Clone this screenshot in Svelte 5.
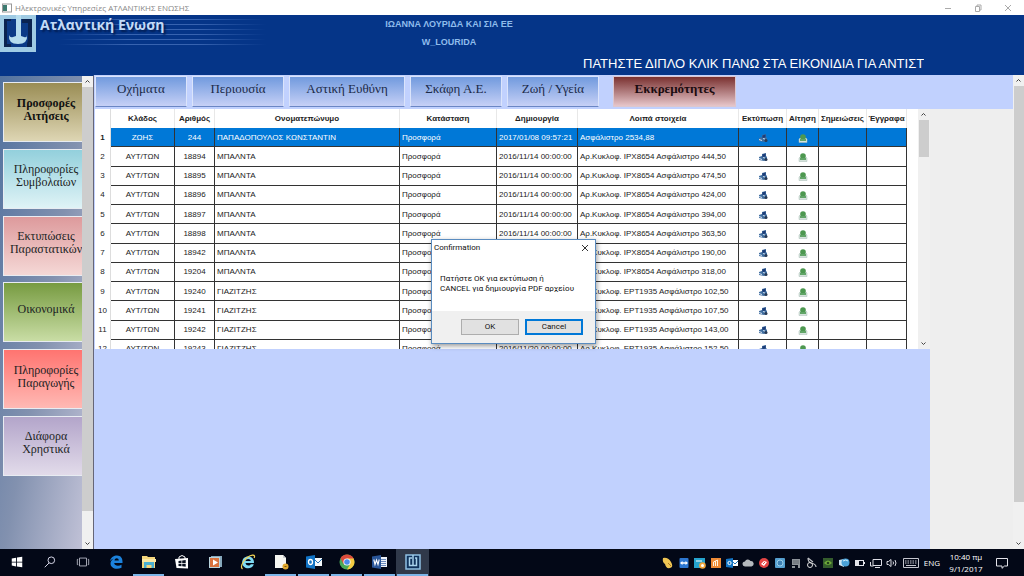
<script lang="ts">
    const menu = [
        { lines: ['Προσφορές', 'Αιτήσεις'], color: 'olive', active: true },
        { lines: ['Πληροφορίες', 'Συμβολαίων'], color: 'cyan' },
        { lines: ['Εκτυπώσεις', 'Παραστατικών'], color: 'pink' },
        { lines: ['Οικονομικά'], color: 'green' },
        { lines: ['Πληροφορίες', 'Παραγωγής'], color: 'red' },
        { lines: ['Διάφορα', 'Χρηστικά'], color: 'purple' }
    ];

    const tabs = ['Οχήματα', 'Περιουσία', 'Αστική Ευθύνη', 'Σκάφη Α.Ε.', 'Ζωή / Υγεία'];

    const columns = [
        'Κλάδος', 'Αριθμός', 'Ονοματεπώνυμο', 'Κατάσταση', 'Δημιουργία',
        'Λοιπά στοιχεία', 'Εκτύπωση', 'Αίτηση', 'Σημειώσεις', 'Έγγραφα'
    ];

    const car = (no: number, name: string, date: string, plate: string, amount: string) => ({
        branch: 'ΑΥΤ/ΤΩΝ',
        no,
        name,
        date: `${date} 00:00:00`,
        info: `Αρ.Κυκλοφ. ${plate} Ασφάλιστρο ${amount}`
    });

    const rows = [
        { branch: 'ΖΩΗΣ', no: 244, name: 'ΠΑΠΑΔΟΠΟΥΛΟΣ ΚΩΝΣΤΑΝΤΙΝ', date: '2017/01/08 09:57:21', info: 'Ασφάλιστρο 2534,88' },
        car(18894, 'ΜΠΑΛΝΤΑ', '2016/11/14', 'ΙΡΧ8654', '444,50'),
        car(18895, 'ΜΠΑΛΝΤΑ', '2016/11/14', 'ΙΡΧ8654', '474,50'),
        car(18896, 'ΜΠΑΛΝΤΑ', '2016/11/14', 'ΙΡΧ8654', '424,00'),
        car(18897, 'ΜΠΑΛΝΤΑ', '2016/11/14', 'ΙΡΧ8654', '394,00'),
        car(18898, 'ΜΠΑΛΝΤΑ', '2016/11/14', 'ΙΡΧ8654', '363,50'),
        car(18942, 'ΜΠΑΛΝΤΑ', '2016/11/14', 'ΙΡΧ8654', '190,00'),
        car(19204, 'ΜΠΑΛΝΤΑ', '2016/11/14', 'ΙΡΧ8654', '318,00'),
        car(19240, 'ΓΙΑΖΙΤΖΗΣ', '2016/11/20', 'ΕΡΤ1935', '102,50'),
        car(19241, 'ΓΙΑΖΙΤΖΗΣ', '2016/11/20', 'ΕΡΤ1935', '107,50'),
        car(19242, 'ΓΙΑΖΙΤΖΗΣ', '2016/11/20', 'ΕΡΤ1935', '143,00'),
        car(19243, 'ΓΙΑΖΙΤΖΗΣ', '2016/11/20', 'ΕΡΤ1935', '152,50')
    ];

    let selected = $state(0);
    let confirming = $state(true);
</script>

{#snippet scrollbar(kind: string)}
    <div class="scrollbar {kind}">
        <button aria-label="Επάνω"><svg viewBox="0 0 11 11"><path d="M3.5 6.5l2-2 2 2" /></svg></button>
        <div class="track"><div class="thumb"></div></div>
        <button aria-label="Κάτω"><svg viewBox="0 0 11 11"><path d="M3.5 4.5l2 2 2-2" /></svg></button>
    </div>
{/snippet}

<div class="desktop">
    <div class="titlebar">
        <svg class="app-icon" viewBox="0 0 10 10">
            <rect x="0.5" y="1" width="9" height="8" fill="#fff" stroke="#999" />
            <rect x="1" y="2" width="4" height="6" fill="#3c7a70" />
        </svg>
        <span>Ηλεκτρονικές Υπηρεσίες ΑΤΛΑΝΤΙΚΗΣ ΕΝΩΣΗΣ</span>
        <div class="window-controls">
            <button aria-label="Ελαχιστοποίηση"><svg viewBox="0 0 10 10"><path d="M2 5.5h6" /></svg></button>
            <button aria-label="Επαναφορά"><svg viewBox="0 0 10 10"><path d="M2.5 3.5h4v5h-4zM4 3V2h4v5H7" /></svg></button>
            <button aria-label="Κλείσιμο"><svg viewBox="0 0 10 10"><path d="M2 2l6 6M8 2l-6 6" /></svg></button>
        </div>
    </div>

    <header>
        <div class="brand">
            <svg class="logo" viewBox="0 0 36 37">
                <rect width="36" height="37" fill="#9fcbe4" />
                <path d="M4 4h28v28H4z" fill="#0b3a86" />
                <path d="M4 4h7v2H7v23h4v3H4zM22 4h10v28h-5v-3l1-4V8h-6z" fill="#0a2350" />
                <path d="M16 0h5v21h-5z" fill="#b5dcee" />
                <path d="M9 20q1 3 4 2l3-1h5l3 1q3 1 3-2 1 9-9 9Q8 29 9 20z" fill="#b5dcee" />
            </svg>
            <div class="stripes">
                <h1>Ατλαντική Ενωση</h1>
            </div>
        </div>
        <div class="user">
            <p>ΙΩΑΝΝΑ ΛΟΥΡΙΔΑ ΚΑΙ ΣΙΑ ΕΕ</p>
            <p>W_LOURIDA</p>
        </div>
        <p class="marquee">ΠΑΤΗΣΤΕ ΔΙΠΛΟ ΚΛΙΚ ΠΑΝΩ ΣΤΑ ΕΙΚΟΝΙΔΙΑ ΓΙΑ ΑΝΤΙΣΤΟ</p>
    </header>

    <div class="content">
        <aside>
            <nav>
                {#each menu as { lines, color, active }}
                    <button class="menu-item {color}" class:active>
                        {#each lines as line}<span>{line}</span>{/each}
                    </button>
                {/each}
            </nav>
            {@render scrollbar('side')}
        </aside>

        <main>
            <div class="tabs">
                {#each tabs as tab}
                    <button class="tab" class:wide={tab === 'Αστική Ευθύνη'}>{tab}</button>
                {/each}
                <button class="tab pending">Εκκρεμότητες</button>
            </div>

            <div class="workspace">
                <div class="left">
                    <div class="grid">
                        <div class="table-clip">
                            <table>
                                <colgroup>
                                    <col class="c-index" /><col class="c-branch" /><col class="c-no" />
                                    <col class="c-name" /><col class="c-state" /><col class="c-date" />
                                    <col class="c-info" /><col class="c-print" /><col class="c-apply" />
                                    <col class="c-notes" /><col class="c-docs" />
                                </colgroup>
                                <thead>
                                    <tr>
                                        <th class="index"></th>
                                        {#each columns as column}<th>{column}</th>{/each}
                                    </tr>
                                </thead>
                                <tbody>
                                    {#each rows as row, i}
                                        <tr class:selected={i === selected} onclick={() => (selected = i)}>
                                            <td class="index">{i + 1}</td>
                                            <td class="center">{row.branch}</td>
                                            <td class="center">{row.no}</td>
                                            <td>{row.name}</td>
                                            <td>Προσφορά</td>
                                            <td>{row.date}</td>
                                            <td>{row.info}</td>
                                            <td class="center">
                                                <svg class="cell-icon" viewBox="0 0 10 10">
                                                    <path d="M1 5l3-1V2l4-1v3l1 1v3L6 9 1 8z" fill="#3f6d9f" />
                                                    <path d="M4.5 2.5l3-1v3l-3 .5z" fill="#1d3c78" />
                                                    <path d="M1 6l3 1v1L1 7z" fill="#d6e2ef" />
                                                    <circle cx="8" cy="7.5" r="1.5" fill="#283a55" />
                                                    <path d="M5 5.5l2 .5" stroke="#c8d9ea" />
                                                </svg>
                                            </td>
                                            <td class="center">
                                                <svg class="cell-icon" viewBox="0 0 10 10">
                                                    <path d="M1 6l1-1h6l1 1v3.5H1z" fill="#d5e3dc" stroke="#a9bdb6" stroke-width=".5" />
                                                    <circle cx="5" cy="4" r="2.8" fill="#4d9850" />
                                                    <path d="M2 6h6v2H2z" fill="#62a568" />
                                                </svg>
                                            </td>
                                            <td></td>
                                            <td></td>
                                        </tr>
                                    {/each}
                                </tbody>
                            </table>
                        </div>
                        {@render scrollbar('list')}
                    </div>
                </div>
                <div class="blank"></div>
            </div>
        </main>
        {@render scrollbar('page')}
    </div>

    {#if confirming}
        <div class="dialog" role="dialog" aria-labelledby="dialog-title">
            <div class="dialog-head">
                <span id="dialog-title">Confirmation</span>
                <button aria-label="Close" onclick={() => (confirming = false)}>
                    <svg viewBox="0 0 8 8"><path d="M1 1l6 6M7 1L1 7" /></svg>
                </button>
            </div>
            <p>Πατήστε ΟΚ για εκτύπωση ή<br />CANCEL για δημιουργία PDF αρχείου</p>
            <div class="dialog-actions">
                <button onclick={() => (confirming = false)}>OK</button>
                <button class="default" onclick={() => (confirming = false)}>Cancel</button>
            </div>
        </div>
    {/if}

    <footer>
        <button aria-label="Start">
            <svg class="small" viewBox="0 0 16 16"><path d="M2 4l5-1v4.6H2zM8 2.9L14 2v5.6H8zM2 8.5h5V13l-5-1zM8 8.5h6V14l-6-.9z" fill="#fff" /></svg>
        </button>
        <button aria-label="Search">
            <svg class="small" viewBox="0 0 16 16" fill="none" stroke="#dde" stroke-width="1.1"><circle cx="9.5" cy="6" r="3.8" /><path d="M7 9l-5 5" /></svg>
        </button>
        <button aria-label="Task view">
            <svg class="small" viewBox="0 0 16 16" fill="none" stroke="#b9bcc8"><path d="M4 3.5h8v9H4zM2.500 5h-1v6h1M13.500 5h1v6h-1" /></svg>
        </button>
        <button aria-label="Edge">
            <svg viewBox="0 0 16 16"><path d="M2 7C3 3 6 1.5 9 1.5c4 0 5.500 3 5.500 6V9H6.200c.2 3 4.500 3.500 7.300 1.800v3C8 16.200 2.500 14 2.500 9.500c0-2 1.300-3.800 3.200-4.700C4.200 5 3 5.800 2 7zm4.500-.6h4.300C10.700 3.700 6.900 3.600 6.500 6.400z" fill="#1c82dc" /></svg>
        </button>
        <button class="open" aria-label="Explorer">
            <svg viewBox="0 0 16 16"><path d="M1 2h5l1 1h7v11H1z" fill="#f4d67c" /><path d="M1 5h14v3H1z" fill="#fbe9a5" /><path d="M3 8h10v6h-2.500v-3h-5v3H3z" fill="#4bb0d2" /></svg>
        </button>
        <button aria-label="Store">
            <svg viewBox="0 0 16 16"><path d="M5 5V3q3-3 6 0v2" fill="none" stroke="#fff" /><path d="M1 5l13-1v10.500L2.500 14z" fill="#fff" /><path d="M4.500 7l3-.4V9h-3zM8.200 6.500l3.500-.4V9H8.200zM4.500 9.700h3v2.500l-3-.3zM8.200 9.700h3.500v3l-3.500-.4z" fill="#08101f" /></svg>
        </button>
        <button aria-label="Media player">
            <svg viewBox="0 0 16 16"><rect x="4" y="2" width="11" height="11" fill="#87a9bd" /><rect x="2" y="3" width="11" height="11" fill="#b9d3dc" /><rect x="3" y="4" width="9" height="9" fill="#d8713c" /><path d="M6 5.500l5 3-5 3z" fill="#fff" /></svg>
        </button>
        <button aria-label="Internet Explorer">
            <svg viewBox="0 0 16 16"><path d="M8 2.500c4 0 6 2.500 6 6.500H5.500c.4 3 4.400 3.200 5.300 1.200h3C12.500 16 2.200 15.800 2.200 8.500c0-3.800 2.400-6 5.800-6zM5.500 7h5.300C10.600 4.200 5.900 4.200 5.500 7z" fill="#7edaf3" /><path d="M2.500 15C-1 12 6 2 12.500 1.200c2.500-.2 2.300 1.500 1.600 2.800" fill="none" stroke="#f0d254" stroke-width="1.2" /></svg>
        </button>
        <button class="open" aria-label="Document">
            <svg viewBox="0 0 16 16"><path d="M2 1h8l3 3v10H2z" fill="#f6f6f2" /><path d="M10 1v3h3z" fill="#c9ccd0" /><circle cx="12.500" cy="12.500" r="3" fill="#e2a92f" /><path d="M11.500 12.500h2" stroke="#7d5510" /></svg>
        </button>
        <button class="open" aria-label="Outlook">
            <svg viewBox="0 0 16 16"><path d="M8 4h8v8H8z" fill="#f3f8fc" /><path d="M8 5l4 4 4-4" fill="none" stroke="#2474b8" /><path d="M0 2.500L9 1v14L0 13.500z" fill="#1173c5" /><ellipse cx="4.500" cy="8" rx="2" ry="2.500" fill="none" stroke="#fff" stroke-width="1.3" /></svg>
        </button>
        <button class="open" aria-label="Chrome">
            <svg viewBox="0 0 16 16"><circle cx="8" cy="8" r="7.500" fill="#4aa857" /><path d="M1.500 4.250A7.500 7.500 0 0 1 14.500 4.250L15 8H8L4.500 10z" fill="#dc4a3c" /><path d="M14.600 4.500H8l3.200 5.500L8 15.500A7.500 7.500 0 0 0 14.600 4.500z" fill="#f5cb42" /><circle cx="8" cy="8" r="3.600" fill="#fff" /><circle cx="8" cy="8" r="2.800" fill="#4b8bea" /></svg>
        </button>
        <button class="open" aria-label="Word">
            <svg viewBox="0 0 16 16"><path d="M8 3h7v10H8z" fill="#eef3fa" /><path d="M9 5.500h5M9 7.500h5M9 9.500h5M9 11.500h5" stroke="#4a70ad" stroke-width=".8" /><path d="M0 2.500L9 1v14L0 13.500z" fill="#2a5699" /><path d="M1.800 5.500l1.200 5 1.500-4.500L6 10.500l1.200-5" fill="none" stroke="#fff" stroke-width="1.1" /></svg>
        </button>
        <button class="open current" aria-label="Ατλαντική Ενωση">
            <svg viewBox="0 0 16 16"><rect x="1" y="1" width="14" height="14" fill="#10335c" stroke="#8fc0e2" stroke-width="1.5" /><path d="M8 1v10M7 4H4.500v7.500h7V4H10" fill="none" stroke="#a8d2ec" stroke-width="1.5" /></svg>
        </button>

        <div class="tray">
            <svg viewBox="0 0 12 12"><path d="M1 1q5-1 8 4 3 5-1 6T3 7Q0 5 1 1z" fill="#efc553" /><path d="M6 6l3 3" stroke="#a7782a" /></svg>
            <svg viewBox="0 0 12 12"><rect x="1.500" y="1" width="9" height="10" rx="1" fill="#2d77d1" /><path d="M2 6l2.500-2v1.200h3V4L10 6 7.500 8V6.800h-3V8z" fill="#fff" /></svg>
            <svg viewBox="0 0 12 12"><rect y="1" width="11" height="10" fill="#25a3ce" /><path d="M2 4h6" stroke="#fff" /><circle cx="8.500" cy="8.500" r="3.300" fill="#f2a43a" /><circle cx="8.500" cy="8.500" r="1.500" fill="#fff" /></svg>
            <svg viewBox="0 0 12 12"><rect x="1" y="1" width="10" height="10" fill="#ee8a35" /><path d="M3.500 9V5l4-2v6M5.500 4v5" fill="none" stroke="#fff4e0" /></svg>
            <svg viewBox="0 0 12 12"><path d="M6 3h6v6H6z" fill="#fff" /><path d="M6 4l3 3 3-3" fill="none" stroke="#1f76bd" /><path d="M0 2l7-1v10l-7-1z" fill="#1475c4" /><circle cx="3.500" cy="6" r="1.600" fill="none" stroke="#fff" /></svg>
            <svg viewBox="0 0 12 12"><path d="M3 9.500a2.500 2.500 0 0 1 0-5 3 3 0 0 1 5.500-.5A2.800 2.800 0 0 1 9.500 9.500z" fill="#b5b9be" /></svg>
            <svg viewBox="0 0 12 12"><circle cx="6" cy="6" r="5" fill="#e44545" /><path d="M3 7l3-3 3 1-3 4z" fill="#fff" /><path d="M5 7l2-2" stroke="#e44545" /></svg>
            <svg viewBox="0 0 12 12"><rect x="1" y="1" width="10" height="10" rx="1" fill="#559fd0" /><circle cx="6" cy="6" r="3" fill="#3f81b5" stroke="#9dd0e9" /></svg>
            <svg viewBox="0 0 12 12"><path d="M2 2h8v6H2zM2 9h3v2H2zM8 8h2v3H8z" fill="#8d9399" /><path d="M3 4h6M3 6h6" stroke="#626970" /></svg>
            <svg viewBox="0 0 12 12"><path d="M2 1q0 4 3 5 5 1 5 4M2 1l5 4" fill="none" stroke="#bfc1c5" stroke-width="1.2" /><circle cx="4" cy="8" r="2.500" fill="none" stroke="#ddd" /></svg>
            <svg viewBox="0 0 12 12"><rect x="1" y="1" width="10" height="10" fill="#345c2c" /><path d="M2 6q4-5 8 0-4 4-8 0z" fill="#72ad3b" /><circle cx="6" cy="6" r="1.300" fill="#21401b" /></svg>
            <svg viewBox="0 0 12 12"><path d="M1 3l5-1v8L1 8z" fill="#cde5f3" /><circle cx="7.500" cy="5.500" r="4" fill="#4ba2d8" /><path d="M5 4q3-2 5 0" fill="none" stroke="#d5f1fd" /></svg>
            <svg viewBox="0 0 12 12"><rect x="1.500" y="3.500" width="8" height="5" fill="none" stroke="#e5e5ea" /><path d="M2 4h3v4H2zM10 5h1v2h-1z" fill="#e5e5ea" /></svg>
            <svg viewBox="0 0 12 12" fill="none" stroke="#dcdce4"><path d="M3 2.500h8.500v6H3zM5 10.500h5M.5 5v4h3" /></svg>
            <svg viewBox="0 0 12 12" fill="none" stroke="#dcdce4"><path d="M1 4.500h1.500l2.500-2v7l-2.500-2H1zM7 4.500q1 1.500 0 3M9 3q2 3 0 6" /></svg>
            <svg class="keyboard" viewBox="0 0 18 12" fill="none" stroke="#c5c6ce"><path d="M1.500 1.500h15v9h-15zM4 8.500h10" /><path d="M3 4h12M3 6h12" stroke-dasharray="1.5 1" /></svg>
            <span>ENG</span>
            <div class="clock"><span>10:40 πμ</span><span>9/1/2017</span></div>
            <svg viewBox="0 0 12 12" fill="none" stroke="#e3e3ea"><path d="M.5 1.500h11v7.500H8.500L6 11.300V9H.5z" /></svg>
        </div>
    </footer>
</div>

<style>
    :global(body) {
        margin: 0;
        overflow: hidden;
    }

    button {
        border: none;
        padding: 0;
        margin: 0;
        background: transparent;
        color: inherit;
        font: inherit;
        cursor: pointer;
    }

    p, h1 {
        margin: 0;
    }

    svg {
        display: block;
        flex: none;
    }

    .desktop {
        position: relative;
        display: flex;
        flex-direction: column;
        height: 100vh;
        font-family: 'Liberation Sans', Arial, sans-serif;
    }

    .titlebar {
        display: flex;
        align-items: center;
        gap: 3px;
        height: 15px;
        padding-left: 2px;
        background: #fff;
        color: #888;
        font: 8px 'Open Sans', sans-serif;
    }

    .app-icon {
        width: 10px;
        height: 10px;
    }

    .window-controls {
        display: flex;
        margin-left: auto;
    }

    .window-controls button {
        display: flex;
        justify-content: center;
        width: 30px;
        padding-right: 2px;
    }

    .window-controls svg {
        width: 10px;
        height: 10px;
        fill: none;
        stroke: #aaa;
    }

    header {
        display: grid;
        grid-template-columns: 300px 298px 1fr;
        height: 60px;
        background: #053588;
    }

    .brand {
        display: flex;
    }

    .logo {
        width: 36px;
        height: 37px;
    }

    .stripes {
        width: 230px;
        height: 34px;
        background:
            linear-gradient(90deg, #053588 10%, transparent 40% 70%, #053588),
            repeating-linear-gradient(#053588 0 4px, #3763b0 4px 5px);
    }

    h1 {
        padding-left: 4px;
        color: #c3dbf7;
        font: bold 14px/20px 'Open Sans', sans-serif;
        text-shadow: 2px 2px 2px #021c50;
        white-space: nowrap;
    }

    .user {
        color: #8fbcec;
        font: bold 9px/18px 'Liberation Sans', Arial, sans-serif;
        text-align: center;
    }

    .marquee {
        align-self: end;
        width: 341px;
        margin-left: -15px;
        padding-bottom: 2px;
        overflow: hidden;
        color: #fff;
        font-size: 13px;
        line-height: 18px;
        white-space: nowrap;
    }

    .content {
        display: flex;
        flex: 1;
        min-height: 0;
        background: #c1d1fe;
    }

    aside {
        display: flex;
        width: 93px;
        border-right: 1px solid #667;
        border-top: 1px solid #053588;
        background: linear-gradient(100deg, #52729f, #8291af 50%, #c9c8dc);
    }

    nav {
        display: flex;
        flex-direction: column;
        justify-content: space-between;
        flex: 1;
        min-width: 0;
        padding: 6px 0 73px 3px;
        overflow: hidden;
    }

    .menu-item {
        display: flex;
        flex-direction: column;
        align-items: center;
        justify-content: center;
        width: 86px;
        height: 60px;
        padding-bottom: 5px;
        box-sizing: border-box;
        border: 1px solid #e8ecf2;
        color: #1c1f24;
        font: 12px/13px 'Liberation Serif', serif;
    }

    .active {
        color: #111;
        font-weight: bold;
    }

    .olive { background: linear-gradient(#9a8d55, #ded6b4); }
    .cyan { background: linear-gradient(#93d0dc, #dff3f6); }
    .pink { background: linear-gradient(#dd9a9c, #f5d8d6); }
    .green { background: linear-gradient(#779b41, #c9dda5); }
    .red { background: linear-gradient(#ff7470, #ffb9b4); }
    .purple { background: linear-gradient(#b3a5ca, #e2dbea); }

    .scrollbar {
        display: flex;
        flex-direction: column;
        flex: none;
        width: 11px;
        background: #f0f0f0;
    }

    .scrollbar svg {
        width: 11px;
        height: 11px;
        fill: none;
        stroke: #444;
    }

    .track {
        flex: 1;
    }

    .thumb {
        background: #cdcdcd;
    }

    .side .thumb {
        height: 94%;
    }

    .page .thumb {
        height: 92%;
        margin-left: 1px;
    }

    .list {
        width: 12px;
    }

    .list .thumb {
        height: 17%;
        margin: 0 1px;
    }

    main {
        display: flex;
        flex-direction: column;
        flex: 1;
        min-width: 0;
        padding: 1px 0 0 1px;
    }

    .tabs {
        display: flex;
        gap: 5px;
        height: 33px;
    }

    .tab {
        width: 92px;
        height: 31px;
        padding-bottom: 5px;
        box-sizing: border-box;
        border: 1px solid #dbe4fb;
        border-bottom-color: #6a86c4;
        background: linear-gradient(#719ade, #c6d0f6);
        color: #1b2a48;
        font: 13px/16px 'Liberation Serif', serif;
    }

    .wide {
        width: 116px;
    }

    .pending {
        width: 123px;
        margin-left: 9px;
        border-color: #dcc7cf;
        background: linear-gradient(#7a3130, #e6c6ca);
        color: #1b0c10;
        font-weight: bold;
    }

    .workspace {
        display: flex;
        flex: 1;
        min-height: 0;
    }

    .left {
        flex: 10;
        min-width: 0;
    }

    .blank {
        flex: 1;
        background: #eee;
    }

    .grid {
        display: flex;
        justify-content: space-between;
        height: 240px;
        background: #fff;
    }

    .table-clip {
        overflow: hidden;
    }

    table {
        width: 812px;
        height: 250px;
        table-layout: fixed;
        border-collapse: separate;
        border-spacing: 0;
        color: #222;
        font-size: 8px;
        line-height: 10px;
        white-space: nowrap;
    }

    .c-index { width: 16px; }
    .c-branch { width: 64px; }
    .c-no { width: 40px; }
    .c-name { width: 185px; }
    .c-state { width: 97px; }
    .c-date { width: 81px; }
    .c-info { width: 161px; }
    .c-print { width: 48px; }
    .c-apply { width: 32px; }
    .c-notes { width: 48px; }
    .c-docs { width: 40px; }

    th {
        height: 18px;
        padding: 0;
        border-right: 1px solid #e8e8e8;
        text-align: center;
    }

    td {
        padding: 1px 2px 0;
        border-right: 1px solid #333;
        border-bottom: 1px solid #333;
    }

    .center {
        padding: 1px 0 0;
        text-align: center;
    }

    .index {
        padding: 1px 0 0;
        border-right-color: #ddd;
        border-bottom-color: #fff;
        text-align: center;
    }

    .selected td:not(.index) {
        background: #0078d7;
        color: #fff;
    }

    .selected .index {
        font-weight: bold;
    }

    .cell-icon {
        width: 10px;
        height: 10px;
        margin: 0 auto;
    }

    .dialog {
        position: absolute;
        top: 239px;
        left: calc(50% - 81px);
        width: 165px;
        box-sizing: border-box;
        border: 1px solid #5a8cc0;
        background: #fff;
        box-shadow: 1px 2px 5px #0006;
        color: #111;
        font: 8px/10px Roboto, sans-serif;
    }

    .dialog-head {
        display: flex;
        align-items: center;
        justify-content: space-between;
        height: 16px;
        padding: 0 6px 0 2px;
    }

    .dialog-head svg {
        width: 8px;
        height: 8px;
        fill: none;
        stroke: #333;
    }

    .dialog p {
        padding: 18px 0 17px 8px;
        white-space: nowrap;
    }

    .dialog-actions {
        display: flex;
        justify-content: flex-end;
        gap: 6px;
        padding: 8px 12px;
        background: #f0f0f0;
    }

    .dialog-actions button {
        width: 58px;
        height: 16px;
        box-sizing: border-box;
        border: 1px solid #adadad;
        background: #e1e1e1;
    }

    .dialog-actions .default {
        border: 2px solid #0078d7;
    }

    footer {
        display: flex;
        height: 27px;
        background: #030817;
        color: #fff;
    }

    footer button {
        display: flex;
        align-items: center;
        justify-content: center;
        width: 33px;
        box-sizing: border-box;
        border-bottom: 2px solid transparent;
    }

    footer button svg {
        width: 16px;
        height: 16px;
    }

    footer .small {
        width: 14px;
        height: 14px;
    }

    .open {
        border-image: linear-gradient(90deg, transparent 10%, #7cb5e8 10% 90%, transparent 90%) 2;
    }

    .current {
        background: #30394a;
    }

    .tray {
        display: flex;
        align-items: center;
        gap: 4px;
        margin-left: auto;
        padding-right: 16px;
        font: 8px/12px 'Open Sans', sans-serif;
    }

    .tray svg {
        width: 12px;
        height: 12px;
    }

    .tray .keyboard {
        width: 18px;
    }

    .clock {
        display: flex;
        flex-direction: column;
        align-items: center;
        width: 34px;
        margin: 0 9px 0 5px;
        white-space: nowrap;
    }
</style>
